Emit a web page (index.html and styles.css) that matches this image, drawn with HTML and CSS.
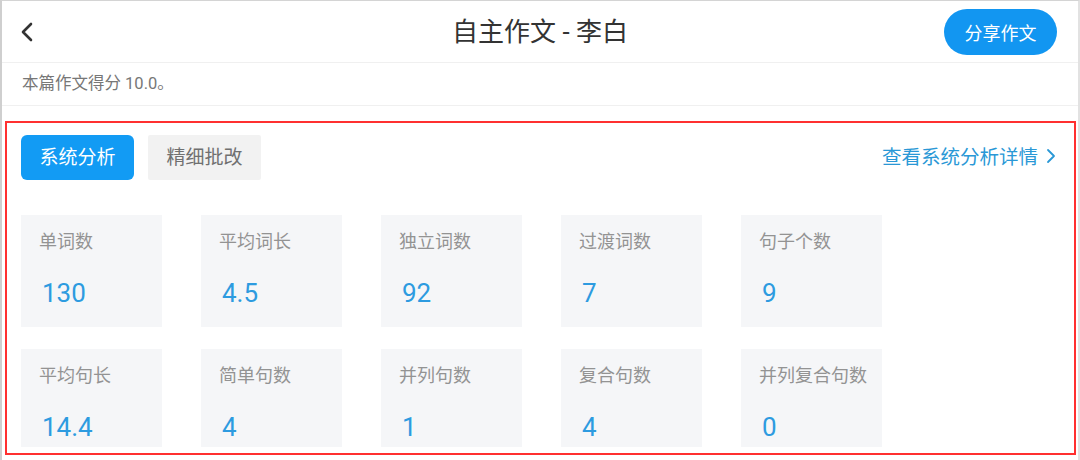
FILE: index.html
```html
<!DOCTYPE html>
<html lang="zh-CN">
<head>
    <meta charset="UTF-8">
    <meta name="viewport" content="width=device-width, initial-scale=1.0">
    <title>自主作文 - 李白</title>
    <link rel="stylesheet" href="styles.css">
</head>
<body>
    <div class="page">
        <div class="header">
            <span class="back">
                <svg width="14" height="20" viewBox="0 0 14 20"><path d="M11 2 L3 10 L11 18" fill="none" stroke="#333" stroke-width="2.6" stroke-linecap="round" stroke-linejoin="round"/></svg>
            </span>
            <div class="title">自主作文 - 李白</div>
            <button class="share-btn">分享作文</button>
        </div>

        <div class="score">本篇作文得分 10.0。</div>

        <div class="analysis">
            <div class="tab-bar">
                <div class="tabs">
                    <span class="tab active">系统分析</span>
                    <span class="tab">精细批改</span>
                </div>
                <a class="detail-link">查看系统分析详情
                    <svg width="10" height="16" viewBox="0 0 10 16"><path d="M2 2 L8 8 L2 14" fill="none" stroke="#2a98d6" stroke-width="1.8" stroke-linecap="round" stroke-linejoin="round"/></svg>
                </a>
            </div>

            <div class="stat-row">
                <div class="stat-card"><div class="stat-label">单词数</div><div class="stat-value">130</div></div>
                <div class="stat-card"><div class="stat-label">平均词长</div><div class="stat-value">4.5</div></div>
                <div class="stat-card"><div class="stat-label">独立词数</div><div class="stat-value">92</div></div>
                <div class="stat-card"><div class="stat-label">过渡词数</div><div class="stat-value">7</div></div>
                <div class="stat-card"><div class="stat-label">句子个数</div><div class="stat-value">9</div></div>
            </div>
            <div class="stat-row last">
                <div class="stat-card"><div class="stat-label">平均句长</div><div class="stat-value">14.4</div></div>
                <div class="stat-card"><div class="stat-label">简单句数</div><div class="stat-value">4</div></div>
                <div class="stat-card"><div class="stat-label">并列句数</div><div class="stat-value">1</div></div>
                <div class="stat-card"><div class="stat-label">复合句数</div><div class="stat-value">4</div></div>
                <div class="stat-card"><div class="stat-label">并列复合句数</div><div class="stat-value">0</div></div>
            </div>
        </div>
    </div>
</body>
</html>
```

FILE: styles.css
```css
* {
    box-sizing: border-box;
}
html, body {
    margin: 0;
    height: 460px;
    overflow: hidden;
    background: #fff;
}
body {
    font-family: Roboto, "Noto Sans CJK SC", sans-serif;
    color: #333;
}
.page {
    height: 460px;
    border-top: 1px solid #d4d4d4;
    border-left: 2px solid #cfcfcf;
    border-right: 2px solid #e2e2e2;
}
.header {
    height: 62px;
    display: flex;
    align-items: center;
    justify-content: space-between;
    padding: 0 21px 0 18px;
    border-bottom: 1px solid #f0f0f0;
    position: relative;
}
.back {
    display: flex;
    align-items: center;
    width: 20px;
}
.title {
    position: absolute;
    left: 0;
    right: 0;
    text-align: center;
    font-size: 26px;
    line-height: 62px;
    color: #333;
    pointer-events: none;
}
.share-btn {
    position: relative;
    border: none;
    background: #1296f1;
    color: #fff;
    font-family: inherit;
    font-size: 18px;
    width: 113px;
    height: 46px;
    border-radius: 23px;
    padding: 0;
    margin-top: 1px;
}
.score {
    height: 43px;
    line-height: 42px;
    padding-left: 20px;
    font-size: 16.5px;
    color: #777;
    border-bottom: 1px solid #f0f0f0;
}
.analysis {
    margin: 15px 2px 0 3px;
    height: 334px;
    border: 2px solid #ff3030;
    padding: 12px 18px 0 14px;
}
.tab-bar {
    display: flex;
    justify-content: space-between;
    align-items: center;
}
.tabs {
    display: flex;
    gap: 14px;
}
.tab {
    width: 113px;
    height: 45px;
    line-height: 45px;
    text-align: center;
    font-size: 19px;
    color: #707070;
    background: #f2f2f2;
    border-radius: 2px;
}
.tab.active {
    background: #129bf4;
    color: #fff;
    border-radius: 6px;
}
.detail-link {
    display: flex;
    align-items: center;
    gap: 8px;
    font-size: 19.5px;
    color: #2a98d6;
    margin-top: -4px;
}
.stat-row {
    display: flex;
    gap: 39px;
    margin-top: 35px;
}
.stat-row.last {
    margin-top: 22px;
}
.stat-card {
    width: 141px;
    height: 112px;
    background: #f5f6f8;
    padding: 15px 0 0 18px;
}
.stat-row.last .stat-card {
    height: 98px;
}
.stat-label {
    font-size: 18px;
    line-height: 24px;
    color: #939393;
}
.stat-value {
    margin-top: 24px;
    padding-left: 3px;
    font-size: 26px;
    line-height: 30px;
    color: #2d9be0;
}
```
